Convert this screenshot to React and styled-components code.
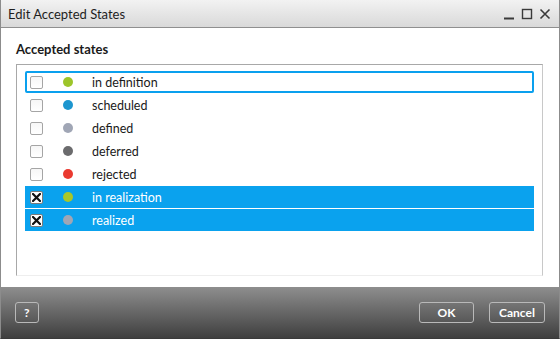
import React, { useState } from "react";
import styled, { createGlobalStyle } from "styled-components";

const GlobalStyle = createGlobalStyle`
  html, body {
    margin: 0;
    padding: 0;
    background: #ffffff;
  }
  body {
    font-family: Lato, "Liberation Sans", sans-serif;
  }
`;

// Outer window frame
const Window = styled.div`
  width: 560px;
  height: 339px;
  box-sizing: border-box;
  display: flex;
  flex-direction: column;
  border-left: 1px solid #8c8c8c;
  border-right: 1px solid #8c8c8c;
  border-bottom: 1px solid #3a3a3a;
  background: #ffffff;
  overflow: hidden;
`;

const TitleBar = styled.div`
  height: 27px;
  flex: none;
  display: flex;
  align-items: center;
  justify-content: space-between;
  padding: 0 8px 0 7px;
  background: linear-gradient(#f2f2f2, #d9d9d9);
  border-bottom: 1px solid #8f8f8f;
`;

const Title = styled.span`
  font-size: 13px;
  color: #1e1e1e;
`;

const Controls = styled.div`
  display: flex;
  align-items: center;
  gap: 6px;
  color: #3a3a3a;
`;

const ControlIcon = styled.svg`
  width: 12px;
  height: 12px;
  display: block;
`;

const Body = styled.div`
  flex: 1;
  display: flex;
  flex-direction: column;
  padding: 13px 16px 11px 15px;
  min-height: 0;
`;

const Heading = styled.div`
  font-size: 13px;
  font-weight: 700;
  color: #1a1a1a;
  margin-bottom: 7px;
`;

const ListBox = styled.div`
  flex: 1;
  border: 1px solid #a8a8a8;
  border-bottom-color: #eeeeee;
  border-right-color: #c8c8c8;
  padding: 6px 8px 0 8px;
  display: flex;
  flex-direction: column;
`;

const Row = styled.div`
  height: 22px;
  margin-bottom: 1px;
  box-sizing: border-box;
  display: flex;
  align-items: center;
  padding-left: ${(p) => (p.$focused ? "3px" : "5px")};
  border: ${(p) => (p.$focused ? "2px solid #0aa0ee" : "0")};
  border-radius: ${(p) => (p.$focused ? "2px" : "0")};
  background: ${(p) => (p.$selected ? "#0aa2ee" : "transparent")};
  color: ${(p) => (p.$selected ? "#ffffff" : "#1a1a1a")};
  font-size: 12.5px;
  cursor: default;
`;

const Box = styled.span`
  width: 13px;
  height: 13px;
  box-sizing: border-box;
  flex: none;
  border: 1px solid ${(p) => (p.$checked ? "#7a7a7a" : "#a5a5a5")};
  border-radius: 2px;
  background: ${(p) => (p.$checked ? "#ffffff" : "linear-gradient(#f6f6f6, #ffffff)")};
  display: flex;
  align-items: center;
  justify-content: center;
`;

const Dot = styled.span`
  width: 10px;
  height: 10px;
  border-radius: 50%;
  flex: none;
  margin-left: 20px;
  background: ${(p) => p.$color};
`;

const Label = styled.span`
  margin-left: 19px;
`;

const Footer = styled.div`
  height: 51px;
  flex: none;
  display: flex;
  align-items: center;
  justify-content: space-between;
  padding: 0 14px 0 14px;
  background: linear-gradient(#8e8e8e, #3f3f3f);
`;

const Right = styled.div`
  display: flex;
  gap: 15px;
`;

const Button = styled.button`
  height: 21px;
  min-width: ${(p) => p.$w || 22}px;
  box-sizing: border-box;
  padding: 0 8px;
  border: 1px solid #b9b9b9;
  border-radius: 3px;
  background: transparent;
  color: #ffffff;
  font-family: Lato, "Liberation Sans", sans-serif;
  font-weight: 700;
  font-size: 12px;
  display: flex;
  align-items: center;
  justify-content: center;
`;

const states = [
  { name: "in definition", color: "#9dc52a", checked: false },
  { name: "scheduled", color: "#1d96cf", checked: false },
  { name: "defined", color: "#a0a6b5", checked: false },
  { name: "deferred", color: "#6b6b6d", checked: false },
  { name: "rejected", color: "#ea3a30", checked: false },
  { name: "in realization", color: "#a9c72a", checked: true },
  { name: "realized", color: "#a0a6b5", checked: true },
];

const Cross = () => (
  <svg width="9" height="9" viewBox="0 0 9 9">
    <path d="M1 1 L8 8 M8 1 L1 8" stroke="#111" strokeWidth="2.2" strokeLinecap="square" />
  </svg>
);

const App = () => {
  const [items, setItems] = useState(states);

  const toggle = (i) => {
    setItems(items.map((s, j) => (j === i ? { ...s, checked: !s.checked } : s)));
  };

  return (
    <>
      <GlobalStyle />
      <Window>
        <TitleBar>
          <Title>Edit Accepted States</Title>
          <Controls>
            <ControlIcon viewBox="0 0 12 12">
              <path d="M1 10.5 H11" stroke="#3a3a3a" strokeWidth="2" />
            </ControlIcon>
            <ControlIcon viewBox="0 0 12 12">
              <rect x="1.5" y="1.5" width="9" height="9" fill="none" stroke="#3a3a3a" strokeWidth="1.4" />
            </ControlIcon>
            <ControlIcon viewBox="0 0 12 12">
              <path d="M1.5 1.5 L10.5 10.5 M10.5 1.5 L1.5 10.5" stroke="#3a3a3a" strokeWidth="1.6" />
            </ControlIcon>
          </Controls>
        </TitleBar>
        <Body>
          <Heading>Accepted states</Heading>
          <ListBox>
            {items.map((s, i) => (
              <Row
                key={s.name}
                $focused={i === 0}
                $selected={s.checked}
                onClick={() => toggle(i)}
              >
                <Box $checked={s.checked}>{s.checked && <Cross />}</Box>
                <Dot $color={s.color} />
                <Label>{s.name}</Label>
              </Row>
            ))}
          </ListBox>
        </Body>
        <Footer>
          <Button $w={23}>?</Button>
          <Right>
            <Button $w={55}>OK</Button>
            <Button $w={56}>Cancel</Button>
          </Right>
        </Footer>
      </Window>
    </>
  );
};

export default App;
